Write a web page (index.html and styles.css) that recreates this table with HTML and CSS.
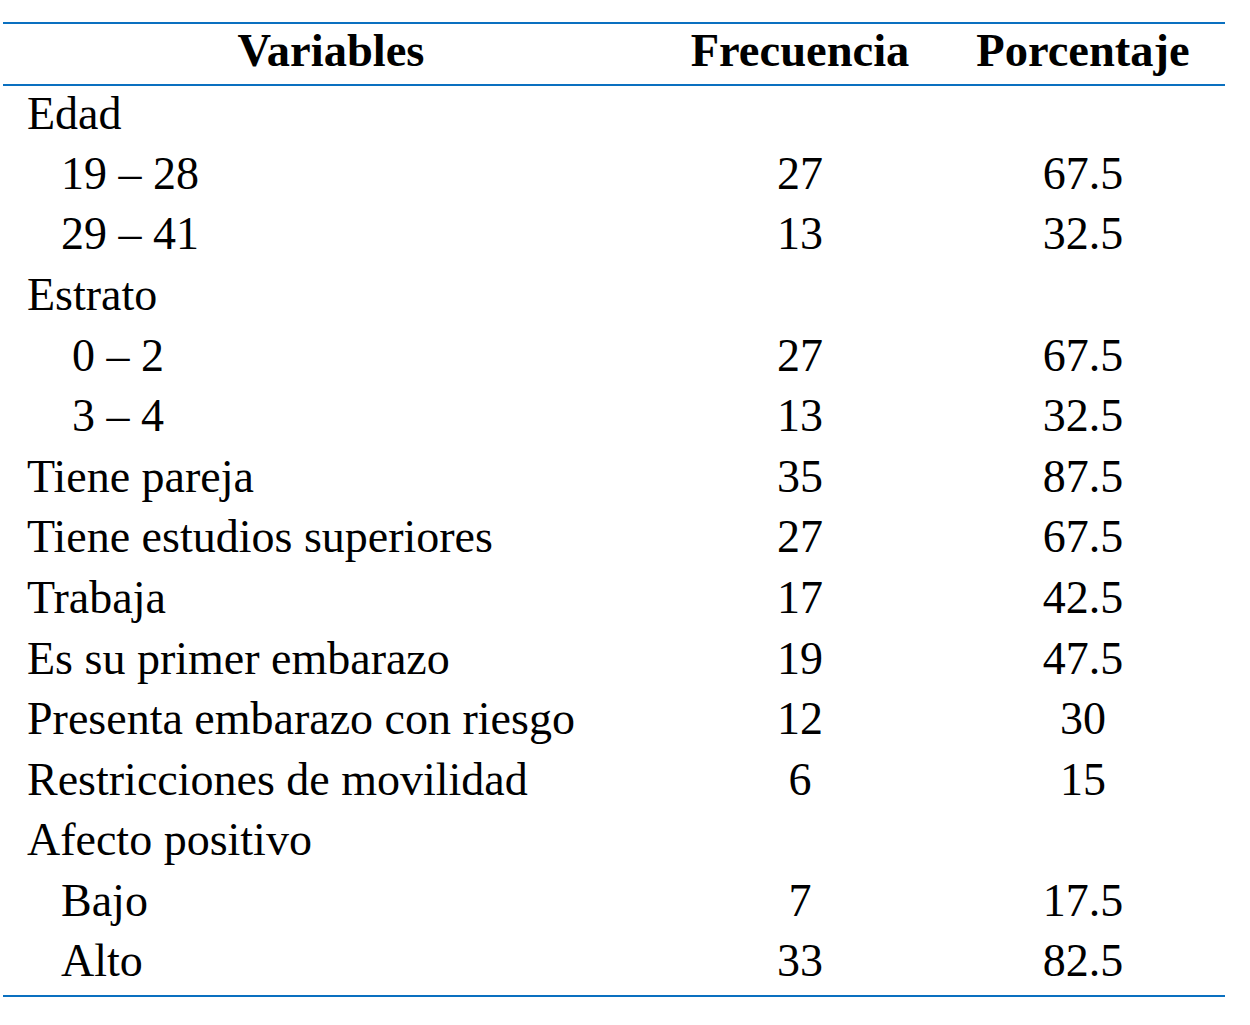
FILE: index.html
```html
<!DOCTYPE html>
<html lang="es">
<head>
<meta charset="utf-8">
<title>Tabla</title>
<link rel="stylesheet" href="styles.css">
</head>
<body>
<table class="data">
  <colgroup>
    <col class="c-var">
    <col class="c-freq">
    <col class="c-pct">
  </colgroup>
  <thead>
    <tr>
      <th>Variables</th>
      <th>Frecuencia</th>
      <th>Porcentaje</th>
    </tr>
  </thead>
  <tbody>
    <tr><td class="lbl">Edad</td><td></td><td></td></tr>
    <tr><td class="lbl sub">19 – 28</td><td class="num">27</td><td class="num">67.5</td></tr>
    <tr><td class="lbl sub">29 – 41</td><td class="num">13</td><td class="num">32.5</td></tr>
    <tr><td class="lbl">Estrato</td><td></td><td></td></tr>
    <tr><td class="lbl sub2">0 – 2</td><td class="num">27</td><td class="num">67.5</td></tr>
    <tr><td class="lbl sub2">3 – 4</td><td class="num">13</td><td class="num">32.5</td></tr>
    <tr><td class="lbl">Tiene pareja</td><td class="num">35</td><td class="num">87.5</td></tr>
    <tr><td class="lbl">Tiene estudios superiores</td><td class="num">27</td><td class="num">67.5</td></tr>
    <tr><td class="lbl">Trabaja</td><td class="num">17</td><td class="num">42.5</td></tr>
    <tr><td class="lbl">Es su primer embarazo</td><td class="num">19</td><td class="num">47.5</td></tr>
    <tr><td class="lbl">Presenta embarazo con riesgo</td><td class="num">12</td><td class="num">30</td></tr>
    <tr><td class="lbl">Restricciones de movilidad</td><td class="num">6</td><td class="num">15</td></tr>
    <tr><td class="lbl">Afecto positivo</td><td></td><td></td></tr>
    <tr><td class="lbl sub">Bajo</td><td class="num">7</td><td class="num">17.5</td></tr>
    <tr class="last"><td class="lbl sub">Alto</td><td class="num">33</td><td class="num">82.5</td></tr>
  </tbody>
</table>
</body>
</html>
```

FILE: styles.css
```css
html, body {
  margin: 0;
  padding: 0;
  background: #ffffff;
}

body {
  padding: 22px 0 0 3px;
  font-family: "Liberation Serif", "Times New Roman", serif;
  color: #000000;
}

.data {
  border-collapse: collapse;
  width: 1222px;
  table-layout: fixed;
  border-top: 2px solid #0a70c0;
  border-bottom: 2px solid #0a70c0;
}

.c-var { width: 656px; }
.c-freq { width: 282px; }
.c-pct { width: 284px; }

.data thead tr {
  height: 60px;
  border-bottom: 2px solid #0a70c0;
}

.data th {
  font-size: 46.5px;
  font-weight: bold;
  text-align: center;
  padding: 0 0 7px;
  vertical-align: middle;
  white-space: nowrap;
}

.data tbody tr {
  height: 60.6px;
}

.data tbody tr.last {
  height: 63px;
}

.data td {
  font-size: 46px;
  padding: 0 0 5px;
  vertical-align: middle;
  white-space: nowrap;
}

.data tbody tr.last td {
  padding-bottom: 8px;
}

.lbl {
  padding-left: 24px !important;
  text-align: left;
}

.lbl.sub {
  padding-left: 58px !important;
}

.lbl.sub2 {
  padding-left: 69px !important;
}

.num {
  text-align: center;
}
```
